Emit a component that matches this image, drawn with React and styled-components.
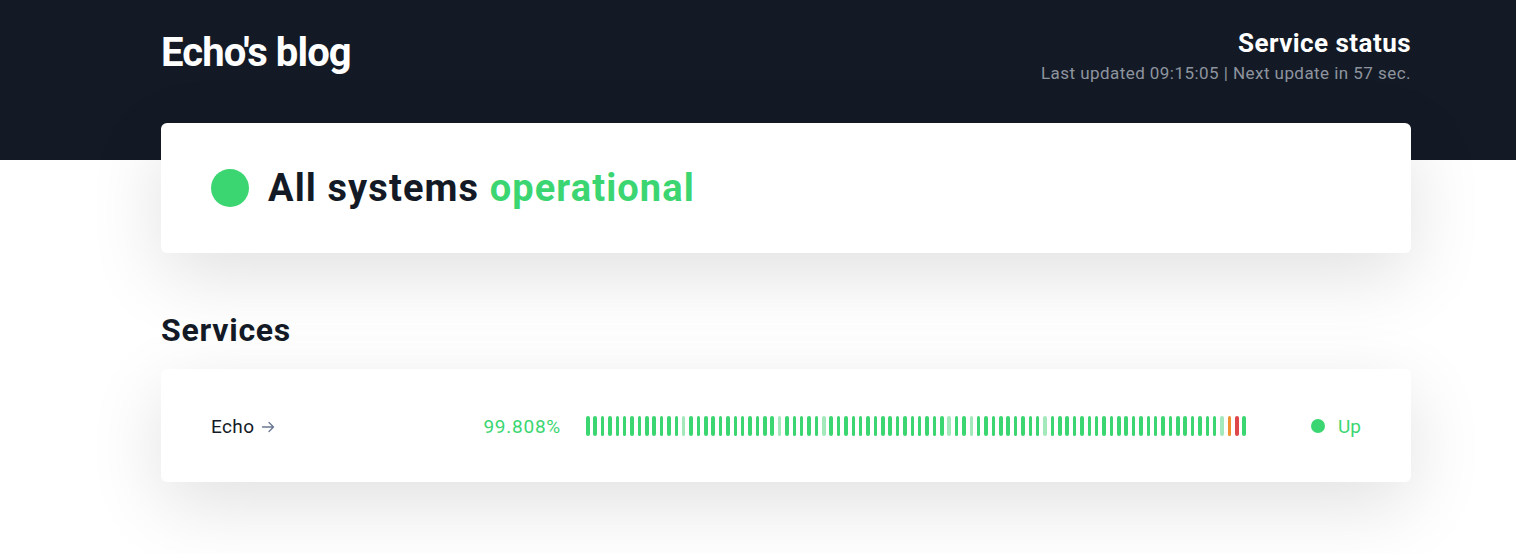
import React from "react";
import styled, { createGlobalStyle } from "styled-components";

const GlobalStyle = createGlobalStyle`
  html, body { margin: 0; padding: 0; background: #ffffff; }
  body { font-family: Roboto, "Noto Sans", "Liberation Sans", sans-serif; color: #131a26; }
  * { box-sizing: border-box; }
`;

const GREEN = "#3bd671";
const LIGHT = "#a3e9bb";
const ORANGE = "#f29030";
const RED = "#df484a";

const Header = styled.header`
  background: #131a26;
  height: 160px;
`;

const Inner = styled.div`
  width: 1250px;
  margin-left: 161px;
`;

const HeaderRow = styled(Inner)`
  display: flex;
  justify-content: space-between;
  align-items: flex-start;
  padding-top: 27px;
`;

const Brand = styled.h1`
  margin: 0;
  font-size: 40px;
  line-height: 52px;
  font-weight: 700;
  letter-spacing: -0.9px;
  color: #ffffff;
`;

const HeaderInfo = styled.div`
  display: flex;
  flex-direction: column;
  align-items: flex-end;
  padding-top: 1px;
`;

const HeaderTitle = styled.div`
  font-size: 26px;
  line-height: 30px;
  font-weight: 700;
  letter-spacing: 0.45px;
  color: #ffffff;
`;

const HeaderSub = styled.div`
  margin-top: 5px;
  font-size: 17px;
  line-height: 20px;
  letter-spacing: 0.45px;
  color: #8e949e;
`;

const Main = styled(Inner)`
  margin-top: -37px;
  padding-bottom: 72px;
`;

const Card = styled.div`
  background: #ffffff;
  border-radius: 6px;
  box-shadow: 0 22px 75px rgba(0, 0, 0, 0.12);
`;

const StatusCard = styled(Card)`
  height: 130px;
  display: flex;
  align-items: center;
  padding-left: 50px;
  gap: 19px;
`;

const BigDot = styled.span`
  width: 38px;
  height: 38px;
  border-radius: 50%;
  background: ${GREEN};
  flex: none;
`;

const Headline = styled.h2`
  margin: 0;
  font-size: 38px;
  line-height: 44px;
  font-weight: 700;
  letter-spacing: 1.1px;
  color: #131a26;
`;

const Accent = styled.span`
  color: ${GREEN};
`;

const SectionTitle = styled.h3`
  margin: 59px 0 21px;
  font-size: 32px;
  line-height: 36px;
  font-weight: 700;
  letter-spacing: 0.75px;
  color: #131a26;
`;

const ServiceCard = styled(Card)`
  height: 113px;
  display: flex;
  align-items: center;
  padding: 1px 50px 0;
`;

const Name = styled.div`
  width: 250px;
  font-size: 19px;
  letter-spacing: 0.4px;
  color: #131a26;
  display: flex;
  align-items: center;
  gap: 7px;
`;

const ArrowIcon = styled.svg`
  width: 14px;
  height: 14px;
  color: #687790;
  margin-top: 1px;
`;

const Uptime = styled.div`
  width: 100px;
  text-align: right;
  font-size: 19px;
  letter-spacing: 0.75px;
  color: ${GREEN};
`;

const Bars = styled.div`
  margin-left: 25px;
  width: 661px;
  height: 20px;
  display: flex;
  justify-content: space-between;
`;

const Bar = styled.span`
  width: 3.6px;
  height: 20px;
  border-radius: 2px;
  background: ${(p) => p.$color};
`;

const Status = styled.div`
  flex: 1;
  display: flex;
  justify-content: flex-end;
  align-items: center;
  gap: 13px;
  font-size: 19px;
  color: ${GREEN};
`;

const SmallDot = styled.span`
  width: 14px;
  height: 14px;
  border-radius: 50%;
  background: ${GREEN};
`;

const light = new Set([13, 26, 32, 49, 52, 62, 86]);
const bars = Array.from({ length: 90 }, (_, i) => {
  if (i === 87) return ORANGE;
  if (i === 88) return RED;
  if (light.has(i)) return LIGHT;
  return GREEN;
});

export default function App() {
  return (
    <>
      <GlobalStyle />
      <Header>
        <HeaderRow>
          <Brand>Echo's blog</Brand>
          <HeaderInfo>
            <HeaderTitle>Service status</HeaderTitle>
            <HeaderSub>Last updated 09:15:05 | Next update in 57 sec.</HeaderSub>
          </HeaderInfo>
        </HeaderRow>
      </Header>
      <Main>
        <StatusCard>
          <BigDot />
          <Headline>
            All systems <Accent>operational</Accent>
          </Headline>
        </StatusCard>
        <SectionTitle>Services</SectionTitle>
        <ServiceCard>
          <Name>
            Echo
            <ArrowIcon viewBox="0 0 14 14" fill="none" stroke="currentColor" strokeWidth="1.3" strokeLinecap="round" strokeLinejoin="round">
              <path d="M1.5 7h11M8 2.5 12.5 7 8 11.5" />
            </ArrowIcon>
          </Name>
          <Uptime>99.808%</Uptime>
          <Bars>
            {bars.map((c, i) => (
              <Bar key={i} $color={c} />
            ))}
          </Bars>
          <Status>
            <SmallDot />
            Up
          </Status>
        </ServiceCard>
      </Main>
    </>
  );
}
